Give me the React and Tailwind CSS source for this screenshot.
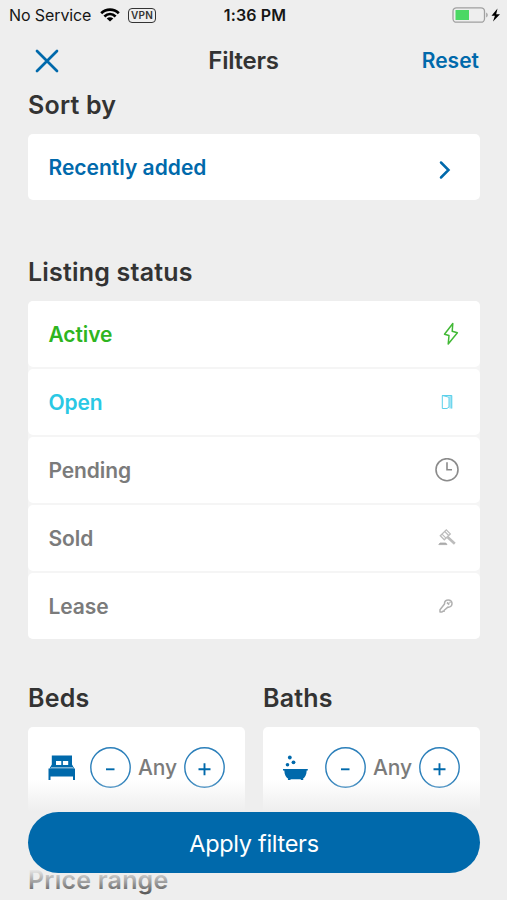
const BLUE = '#0069ab';

function StatusBar() {
  return (
    <header className="grid h-[30px] grid-cols-3 items-center pl-[9px] pr-[6px] text-[16px] leading-[20px] text-[#161616]">
      <div className="flex items-center">
        <span className="w-[83px] whitespace-nowrap tracking-[-0.1px]">No Service</span>
        <svg className="ml-[8px] h-[14px] w-[20px]" viewBox="0 0 20 14" fill="none" stroke="#000" strokeWidth="2.7">
          <path d="M1.2 5.3C6.2.4 13.8.4 18.8 5.3" />
          <path d="M4.4 8.4C7.7 5.3 12.3 5.3 15.6 8.4" />
          <path d="M10 13.6 6.7 10.4C8.5 8.8 11.5 8.8 13.3 10.4Z" fill="#000" stroke="none" />
        </svg>
        <span className="ml-[8px] flex h-[15px] w-[28px] shrink-0 items-center justify-center rounded-[4px] border-[1.5px] border-[#333] text-[10px] font-semibold leading-none tracking-[0.3px] text-[#333]">
          VPN
        </span>
      </div>
      <span className="whitespace-nowrap pb-px text-center text-[16px] font-semibold tracking-[0.15px]">1:36 PM</span>
      <div className="flex items-center justify-end">
        <svg className="h-[17px] w-[49px]" viewBox="0 0 49 17">
          <rect x="1" y=".8" width="31.5" height="14.4" rx="3.5" fill="none" stroke="#a0a0a0" strokeWidth="1.3" />
          <rect x="3.5" y="3" width="13.5" height="10" fill="#4bd864" />
          <path d="M34.2 5.5v5c2-.8 2-4.2 0-5Z" fill="#a0a0a0" />
          <path d="M45.5 1.5 39.5 8.8h3.4L41 14.5 48 7.3h-3.8Z" fill="#000" />
        </svg>
      </div>
    </header>
  );
}

function BoltIcon() {
  return (
    <svg className="h-[24px] w-[16px]" viewBox="0 0 16 24" fill="none" stroke="#42b936" strokeWidth="1.5" strokeLinejoin="round">
      <path d="M9.8 1.5 1.5 12.2 6 13.5 5.2 22 14.4 10.8 9.2 9.2Z" />
    </svg>
  );
}

function DoorIcon() {
  return (
    <svg className="mr-[6px] h-[16px] w-[12px]" viewBox="0 0 12 16" fill="none">
      <path d="M8.3 1.5H11V14.5H8.3Z" fill="#9fe3f3" />
      <path d="M1.3 1.5H10.8V14.5" stroke="#5bd0ea" />
      <path d="M1.3 1.5 8 3.2V13L6 14.5H1.3Z" stroke="#5bd0ea" strokeLinejoin="round" />
    </svg>
  );
}

function ClockIcon() {
  return (
    <svg className="h-[24px] w-[24px]" viewBox="0 0 24 24" fill="none" stroke="#8b8b8b" strokeWidth="1.6">
      <circle cx="12" cy="11.7" r="11" />
      <path d="M12 4.3V11.8H17" />
    </svg>
  );
}

function GavelIcon() {
  return (
    <svg className="mr-[3px] h-[18px] w-[18px]" viewBox="0 0 18 18" fill="none" stroke="#bcbcbc" strokeWidth="1.3">
      <path d="M2.3 6.8 8.3.9 12.3 4.9 6.3 10.8Z" />
      <path d="M4 5.1 8 9.1M6.7 2.5 10.7 6.5" strokeWidth="1.2" />
      <path d="M9.5 8 16.8 14.7" strokeWidth="2.6" />
      <path d="M.8 15.6 2 14H7.8L9 15.6Z" fill="#aaa" stroke="#aaa" strokeWidth=".8" />
    </svg>
  );
}

function KeyIcon() {
  return (
    <svg className="mr-[6px] h-[14px] w-[14px]" viewBox="0 0 14 14" fill="none" stroke="#b0b0b0" strokeWidth="1.5" strokeLinejoin="round">
      <path d="M5.5 5C5.3 2.2 7.2.9 9.2.9C11.6.9 13.2 2.6 13 4.9C12.8 7.3 11 8.4 8.9 8.1L5.2 11.2V12.2H3.8L3 13H1V10.8Z" />
      <path d="M8 3.5 10.3 5.5M11 2.8v1" strokeWidth="1.7" />
    </svg>
  );
}

function BedIcon() {
  return (
    <svg className="h-[26px] w-[28px]" viewBox="0 0 28 26" fill={BLUE}>
      <path fillRule="evenodd" d="M3.8.5H24V9.5L26.3 13.5H1.5L3.8 9.5ZM8 6V10H13.3V6ZM14.9 6V10H20.2V6Z" />
      <path d="M.5 13.5H27V25H25V21.5H2.5V25H.5Z" />
      <path d="M3 12.5H25" stroke="#d5e7f2" strokeWidth=".6" />
    </svg>
  );
}

function BathIcon() {
  return (
    <svg className="h-[26px] w-[28px]" viewBox="0 0 28 26" fill={BLUE}>
      <circle cx="6.8" cy="2.5" r="1.9" />
      <circle cx="10.5" cy="7.3" r="1.9" />
      <circle cx="4.5" cy="9.8" r="1.8" />
      <path d="M0 14H24.8V15.5H23.7C23.5 19.8 22 22.7 20 23.7L20.4 25H18.2L17.5 24.2H8L7 25H4.8L5.2 23.7C3 22.7 1.5 19.8 1.3 15.5H0Z" />
    </svg>
  );
}

const STATUSES = [
  { label: 'Active', color: 'text-[#2eb51f]', Icon: BoltIcon },
  { label: 'Open', color: 'text-[#2ac8e4]', Icon: DoorIcon },
  { label: 'Pending', color: 'text-[#7b7b7b]', Icon: ClockIcon },
  { label: 'Sold', color: 'text-[#7b7b7b]', Icon: GavelIcon },
  { label: 'Lease', color: 'text-[#7b7b7b]', Icon: KeyIcon },
];

function Heading({ children }) {
  return <h2 className="text-[25px] font-semibold leading-[30px] tracking-[0.2px] text-[#333]">{children}</h2>;
}

function RoundButton({ label, children }) {
  return (
    <button aria-label={label} className="flex h-[41px] w-[41px] items-center justify-center rounded-full">
      <svg className="h-[41px] w-[41px]" viewBox="0 0 41 41" fill="none">
        <circle cx="20.5" cy="20.5" r="19.7" stroke="#2b7fba" strokeWidth="1.4" />
        <g stroke={BLUE} strokeWidth="1.9">{children}</g>
      </svg>
    </button>
  );
}

function Counter({ title, Icon }) {
  return (
    <section>
      <Heading>{title}</Heading>
      <div className="mt-[14px] flex h-[98px] items-start rounded-[5px] bg-white pl-[20px] pt-[20px]">
        <div className="flex h-[41px] items-center">
          <Icon />
          <span className="w-[14px]" />
          <RoundButton label={`Fewer ${title}`}>
            <path d="M16 22.3H24.5" />
          </RoundButton>
          <span className="w-[53px] text-center text-[21px] font-medium tracking-[-0.1px] text-[#7b7b7b]">Any</span>
          <RoundButton label={`More ${title}`}>
            <path d="M14.5 22.3H26.5M20.5 16.3V28.3" />
          </RoundButton>
        </div>
      </div>
    </section>
  );
}

export default function App() {
  return (
    <div className="relative h-[900px] w-[507px] overflow-hidden bg-[#eee] font-['Inter','Liberation_Sans',sans-serif]">
      <StatusBar />
      <nav className="grid h-[60px] grid-cols-3 items-center px-[28px] pt-[2px] text-[#333]">
        <button aria-label="Close" className="ml-[7px] w-[24px]">
          <svg className="h-[24px] w-[24px]" viewBox="0 0 24 24" stroke={BLUE} strokeWidth="2.7" strokeLinecap="round">
            <path d="M2 2 22 22M22 2 2 22" />
          </svg>
        </button>
        <h1 className="translate-x-[-10px] text-center text-[24px] font-semibold tracking-[-0.25px]">Filters</h1>
        <button className="text-right text-[21px] font-semibold text-[#0069ab]">Reset</button>
      </nav>

      <main className="pl-[28px] pr-[27px]">
        <Heading>Sort by</Heading>
        <button className="mt-[14px] flex h-[66px] w-full items-center justify-between rounded-[5px] bg-white pl-[20.5px] pr-[29px] text-[21px] font-semibold text-[#0069ab]">
          <span className="pt-px">Recently added</span>
          <svg className="mt-[6px] h-[20px] w-[12px]" viewBox="0 0 12 20" fill="none" stroke={BLUE} strokeWidth="2.5" strokeLinecap="round">
            <path d="M2 2.5 9.5 10 2 17.5" />
          </svg>
        </button>

        <div className="mt-[57px]">
          <Heading>Listing status</Heading>
        </div>
        <ul className="mt-[14px] flex flex-col gap-[2px] rounded-[5px] bg-[#f5f5f5]">
          {STATUSES.map(({ label, color, Icon }) => (
            <li key={label} className={`flex h-[66px] items-center justify-between rounded-[5px] bg-white pl-[20.5px] pr-[21px] text-[21px] font-semibold tracking-[-0.1px] ${color}`}>
              <span className="pt-[2px]">{label}</span>
              <Icon />
            </li>
          ))}
        </ul>

        <div className="mt-[44px] grid grid-cols-[217px_217px] gap-[18px]">
          <Counter title="Beds" Icon={BedIcon} />
          <Counter title="Baths" Icon={BathIcon} />
        </div>
        <div className="mt-[40px]">
          <Heading>Price range</Heading>
        </div>
      </main>

      <footer className="absolute inset-x-0 bottom-0 h-[120px] bg-[linear-gradient(to_bottom,#eeeeee00_0%,#eeeeee_26%,#eeeeee_74%,#eeeeee00_100%)] pl-[28px] pr-[27px] pt-[32px]">
        <button className="flex h-[61px] w-full items-center justify-center rounded-full bg-[#0069ab] pt-[2px] text-[23.5px] tracking-[-0.3px] text-white">Apply filters</button>
      </footer>
    </div>
  );
}
